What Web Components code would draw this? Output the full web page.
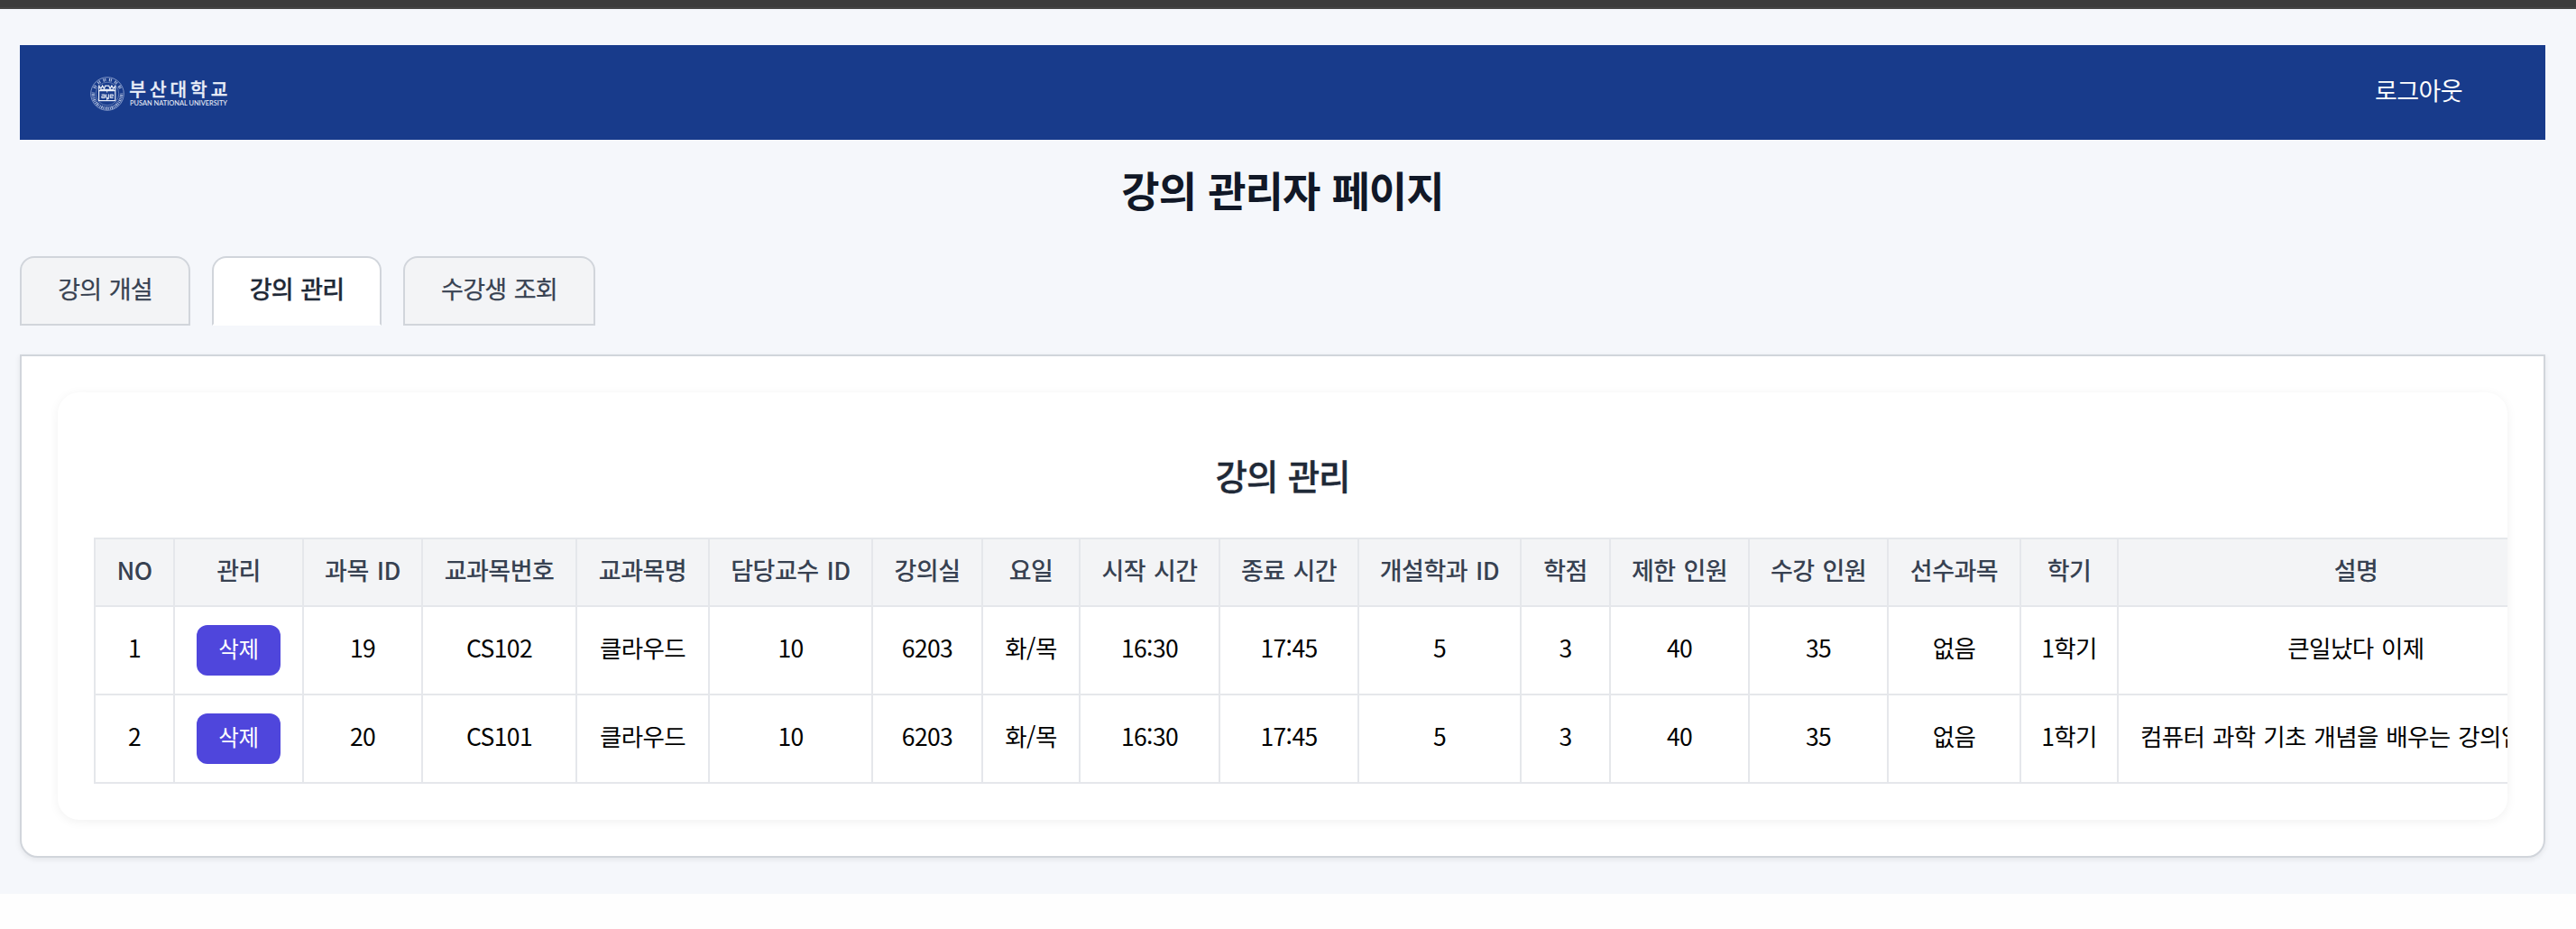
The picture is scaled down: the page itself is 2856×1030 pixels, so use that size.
<!DOCTYPE html>
<html lang="ko">
<head>
<meta charset="utf-8">
<title>강의 관리자 페이지</title>
<style>
html,body{margin:0;background:#fefefe}
body{font-family:"Noto Sans CJK KR","Noto Sans",sans-serif;overflow:hidden}
</style>
</head>
<body>
<admin-page>
  <site-header></site-header>
  <page-title>강의 관리자 페이지</page-title>
  <tab-bar>
    <tab-item style="width:189px">강의 개설</tab-item>
    <tab-item active style="width:188px">강의 관리</tab-item>
    <tab-item style="width:213px">수강생 조회</tab-item>
  </tab-bar>
  <content-panel>
    <course-card heading="강의 관리"><course-table></course-table></course-card>
  </content-panel>
</admin-page>
<script>
function define(name, html, setup) {
  const t = document.createElement('template');
  t.innerHTML = html;
  customElements.define(name, class extends HTMLElement {
    connectedCallback() {
      if (this.shadowRoot) return;
      this.attachShadow({mode: 'open'}).append(t.content.cloneNode(true));
      if (setup) setup(this, this.shadowRoot);
    }
  });
}

define('admin-page', `
<style>
:host{display:block;box-sizing:border-box;height:991px;background:#f5f7fb;border-top:8px solid #3c3c3c}
.rule{height:2px;background:#454545}
.body{display:flex;flex-direction:column;padding:40px 34px 0 22px}
</style><div class="rule"></div><div class="body"><slot></slot></div>`);

define('pnu-logo', `
<style>:host{display:block;width:154px;height:42px}svg{display:block;overflow:visible}</style>
<svg width="154" height="42" viewBox="0 -2 154 42" font-family="'Noto Sans CJK KR',sans-serif" fill="#e8edf7">
  <g fill="none" stroke="#8b9fcd">
    <circle cx="19" cy="19" r="18.3" stroke-width=".9"/>
    <circle cx="19" cy="19" r="12.8" stroke-width=".6"/>
  </g>
  <g fill="none" stroke="#b4c2e1">
    <path d="M3.8 15.5A15.6 15.6 0 0 1 34.2 15.5" stroke-width="3.4" stroke-dasharray="1.2 .8 1 3.6" stroke-dashoffset="-3"/>
    <path d="M3.5 17.6A15.6 15.6 0 1 0 34.5 17.6" stroke-width="3.4" stroke-dasharray=".9 .9 1.3 .8 .8 1.1"/>
  </g>
  <g fill="none" stroke="#e8edf7" stroke-width="1.2">
    <rect x="9.6" y="15.6" width="18.2" height="11"/>
    <path d="M9.7 15.2V10.6L12 13l1.6-3 1.9 3.3 1.2-3.1h4l1.3 3.1 1.9-3.3 1.7 3 2.2-2.4v4.6M11 14.4h15.5"/>
    <path d="M18.7 15.6v2M18.7 24.6v2" stroke-width=".9"/>
  </g>
  <g fill="none" stroke="#e8edf7" stroke-width="1">
    <path d="M12.6 19.9h3.6v3.6h-3.4v-1.8h3.4M17.8 19.4v4h2.6v-4M20.4 23.4v1.3h-2.4M25.6 23.5h-3.4v-3.6h3.2v1.8h-3.2"/>
  </g>
  <text x="43.3" y="22" font-size="20.2" font-weight="500" stroke="#e8edf7" stroke-width=".35" textLength="109">부산대학교</text>
  <text x="44" y="32.2" font-size="7.9" font-weight="500" textLength="108" lengthAdjust="spacingAndGlyphs" font-family="Lato,sans-serif">PUSAN NATIONAL UNIVERSITY</text>
</svg>`);

define('site-header', `
<style>
:host{display:flex;align-items:center;justify-content:space-between;box-sizing:border-box;height:105px;padding:0 92px 0 78px;background:#183b8b;color:#fff}
pnu-logo{margin-top:3px}
a{font-size:27px;line-height:40px;letter-spacing:-.6px;margin-bottom:5px}
</style><pnu-logo></pnu-logo><a>로그아웃</a>`);

define('page-title', `
<style>
:host{display:block;height:129px;text-align:center;font-size:46px;font-weight:700;line-height:108px;letter-spacing:-.9px;word-spacing:1px;color:#111827}
</style><slot></slot>`);

define('tab-bar', `<style>:host{display:flex;gap:24px;height:77px;margin-bottom:32px}</style><slot></slot>`);

define('tab-item', `
<style>
:host{display:block;box-sizing:border-box;height:77px;border:2px solid #d1d5db;border-radius:16px 16px 0 0;background:#f3f4f6;color:#374151;text-align:center;font-size:27px;font-weight:400;-webkit-text-stroke:.25px currentColor;line-height:67px;letter-spacing:-.75px;word-spacing:1.5px}
:host([active]){background:#fff;color:#1f2937;border-bottom-color:#fff;font-weight:500}
</style><slot></slot>`);

define('content-panel', `
<style>
:host{display:block;box-sizing:border-box;height:558px;padding:40px;border:2px solid #d1d5db;border-radius:0 0 20px 20px;background:#fff;box-shadow:0 2px 6px rgba(0,0,0,.08)}
</style><slot></slot>`);

define('course-card', `
<style>
:host{display:block;box-sizing:border-box;height:474px;padding:40px;border-radius:24px;background:#fff;box-shadow:0 2px 12px rgba(0,0,0,.06);overflow:hidden}
h2{margin:0;height:121px;text-align:center;font-size:38.5px;font-weight:500;-webkit-text-stroke:.4px currentColor;line-height:103px;letter-spacing:-1px;word-spacing:1.5px;color:#1f2937}
</style><h2></h2><slot></slot>`, (el, root) => {
  root.querySelector('h2').textContent = el.getAttribute('heading');
});

define('action-button', `
<style>
:host{display:block;margin:0 auto;width:93px;height:56px;border-radius:12px;background:#4f46dc;color:#fff;font-size:24.5px;line-height:51px;text-align:center;letter-spacing:-.4px}
</style><slot></slot>`);

define('course-table', `
<style>
:host{display:block}
table{table-layout:fixed;border-collapse:separate;border-spacing:0;width:2773px}
th,td{box-sizing:border-box;padding:0;text-align:center;vertical-align:middle;white-space:nowrap;border:0 solid #e5e7eb;border-right-width:2px;border-bottom-width:2px;font-size:27px;letter-spacing:-.5px;word-spacing:1.8px}
th:first-child,td:first-child{border-left-width:2px}
th{height:77px;border-top-width:2px;background:#f3f4f6;color:#374151;font-weight:500;line-height:66px;padding-bottom:5px}
td{height:98px;color:#000;line-height:90px;padding-bottom:6px;font-size:26.5px;letter-spacing:-.6px}
td:nth-child(2){padding:0}
</style><table><colgroup></colgroup><thead><tr></tr></thead><tbody></tbody></table>`, (el, root) => {
  const columns = [['NO',90],['관리',143],['과목 ID',132],['교과목번호',171],['교과목명',147],['담당교수 ID',181],['강의실',122],['요일',108],['시작 시간',155],['종료 시간',154],['개설학과 ID',180],['학점',99],['제한 인원',154],['수강 인원',154],['선수과목',147],['학기',108],['설명',528]];
  const rows = [
    ['1','삭제','19','CS102','클라우드','10','6203','화/목','16:30','17:45','5','3','40','35','없음','1학기','큰일났다 이제'],
    ['2','삭제','20','CS101','클라우드','10','6203','화/목','16:30','17:45','5','3','40','35','없음','1학기','컴퓨터 과학 기초 개념을 배우는 강의입니다.']
  ];
  root.querySelector('colgroup').innerHTML = columns.map(c => `<col style="width:${c[1]}px">`).join('');
  root.querySelector('thead tr').innerHTML = columns.map(c => `<th>${c[0]}</th>`).join('');
  root.querySelector('tbody').innerHTML = rows.map(r => '<tr>' + r.map((v, i) =>
    `<td>${i === 1 ? `<action-button>${v}</action-button>` : v}</td>`).join('') + '</tr>').join('');
});
</script>
</body>
</html>
